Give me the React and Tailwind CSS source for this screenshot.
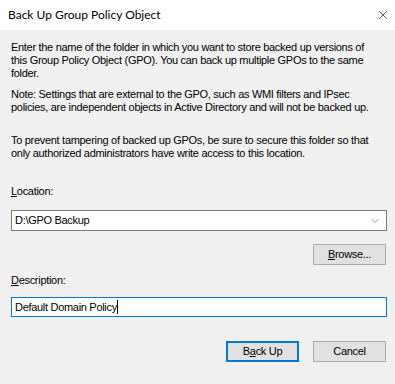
import { X, ChevronDown } from 'lucide-react'

const body = { fontFamily: '"Liberation Sans", Arial, sans-serif' }

function Btn({ children, primary }) {
  return (
    <button
      className={
        primary
          ? 'w-[73px] h-[21px] bg-[#e1e1e1] border-2 border-[#0078d7] text-[11px] text-black flex items-center justify-center'
          : 'w-[73px] h-[21px] bg-[#e1e1e1] border border-[#adadad] text-[11px] text-black flex items-center justify-center'
      }
    >
      {children}
    </button>
  )
}

export default function App() {
  return (
    <div className="w-[395px] h-[384px] bg-[#f0f0f0] flex flex-col overflow-hidden" style={body}>
      {/* Title bar */}
      <div className="h-[30px] shrink-0 bg-white flex items-center justify-between pl-[8px] pr-[5px]">
        <span className="text-[12px] text-black" style={{ fontFamily: 'Lato, "Noto Sans", sans-serif' }}>
          Back Up Group Policy Object
        </span>
        <X className="w-[14px] h-[14px] text-black" strokeWidth={1.1} />
      </div>

      <div className="flex flex-col pl-[11px] pr-[8px] pt-[11px] text-[11px] leading-[13px] text-black tracking-[-0.3px] whitespace-nowrap">
        <p>
          Enter the name of the folder in which you want to store backed up versions of
          <br />
          this Group Policy Object (GPO). You can back up multiple GPOs to the same
          <br />
          folder.
        </p>
        <p className="mt-[8px]">
          Note: Settings that are external to the GPO, such as WMI filters and IPsec
          <br />
          policies, are independent objects in Active Directory and will not be backed up.
        </p>
        <p className="mt-[20px]">
          To prevent tampering of backed up GPOs, be sure to secure this folder so that
          <br />
          only authorized administrators have write access to this location.
        </p>

        <div className="mt-[25px]">
          <span className="underline">L</span>ocation:
        </div>
        <div className="mt-[12px] h-[21px] bg-white border border-[#7a7a7a] flex items-center justify-between pl-[3px] pr-[5px]">
          <span>D:\GPO Backup</span>
          <ChevronDown className="w-[12px] h-[12px] text-[#555]" strokeWidth={1.2} />
        </div>

        <div className="mt-[13px] flex justify-end pr-[1px]">
          <Btn>
            <span className="underline">B</span>rowse...
          </Btn>
        </div>

        <div className="mt-[9px]">
          <span className="underline">D</span>escription:
        </div>
        <div className="mt-[10px] h-[20px] bg-white border border-[#0078d7] flex items-center pl-[3px]">
          <span>Default Domain Policy</span>
          <span className="w-px h-[14px] bg-black" />
        </div>

        <div className="mt-[24px] flex justify-end gap-[14px] pr-[1px]">
          <Btn primary>
            B<span className="underline">a</span>ck Up
          </Btn>
          <Btn>Cancel</Btn>
        </div>
      </div>
    </div>
  )
}
